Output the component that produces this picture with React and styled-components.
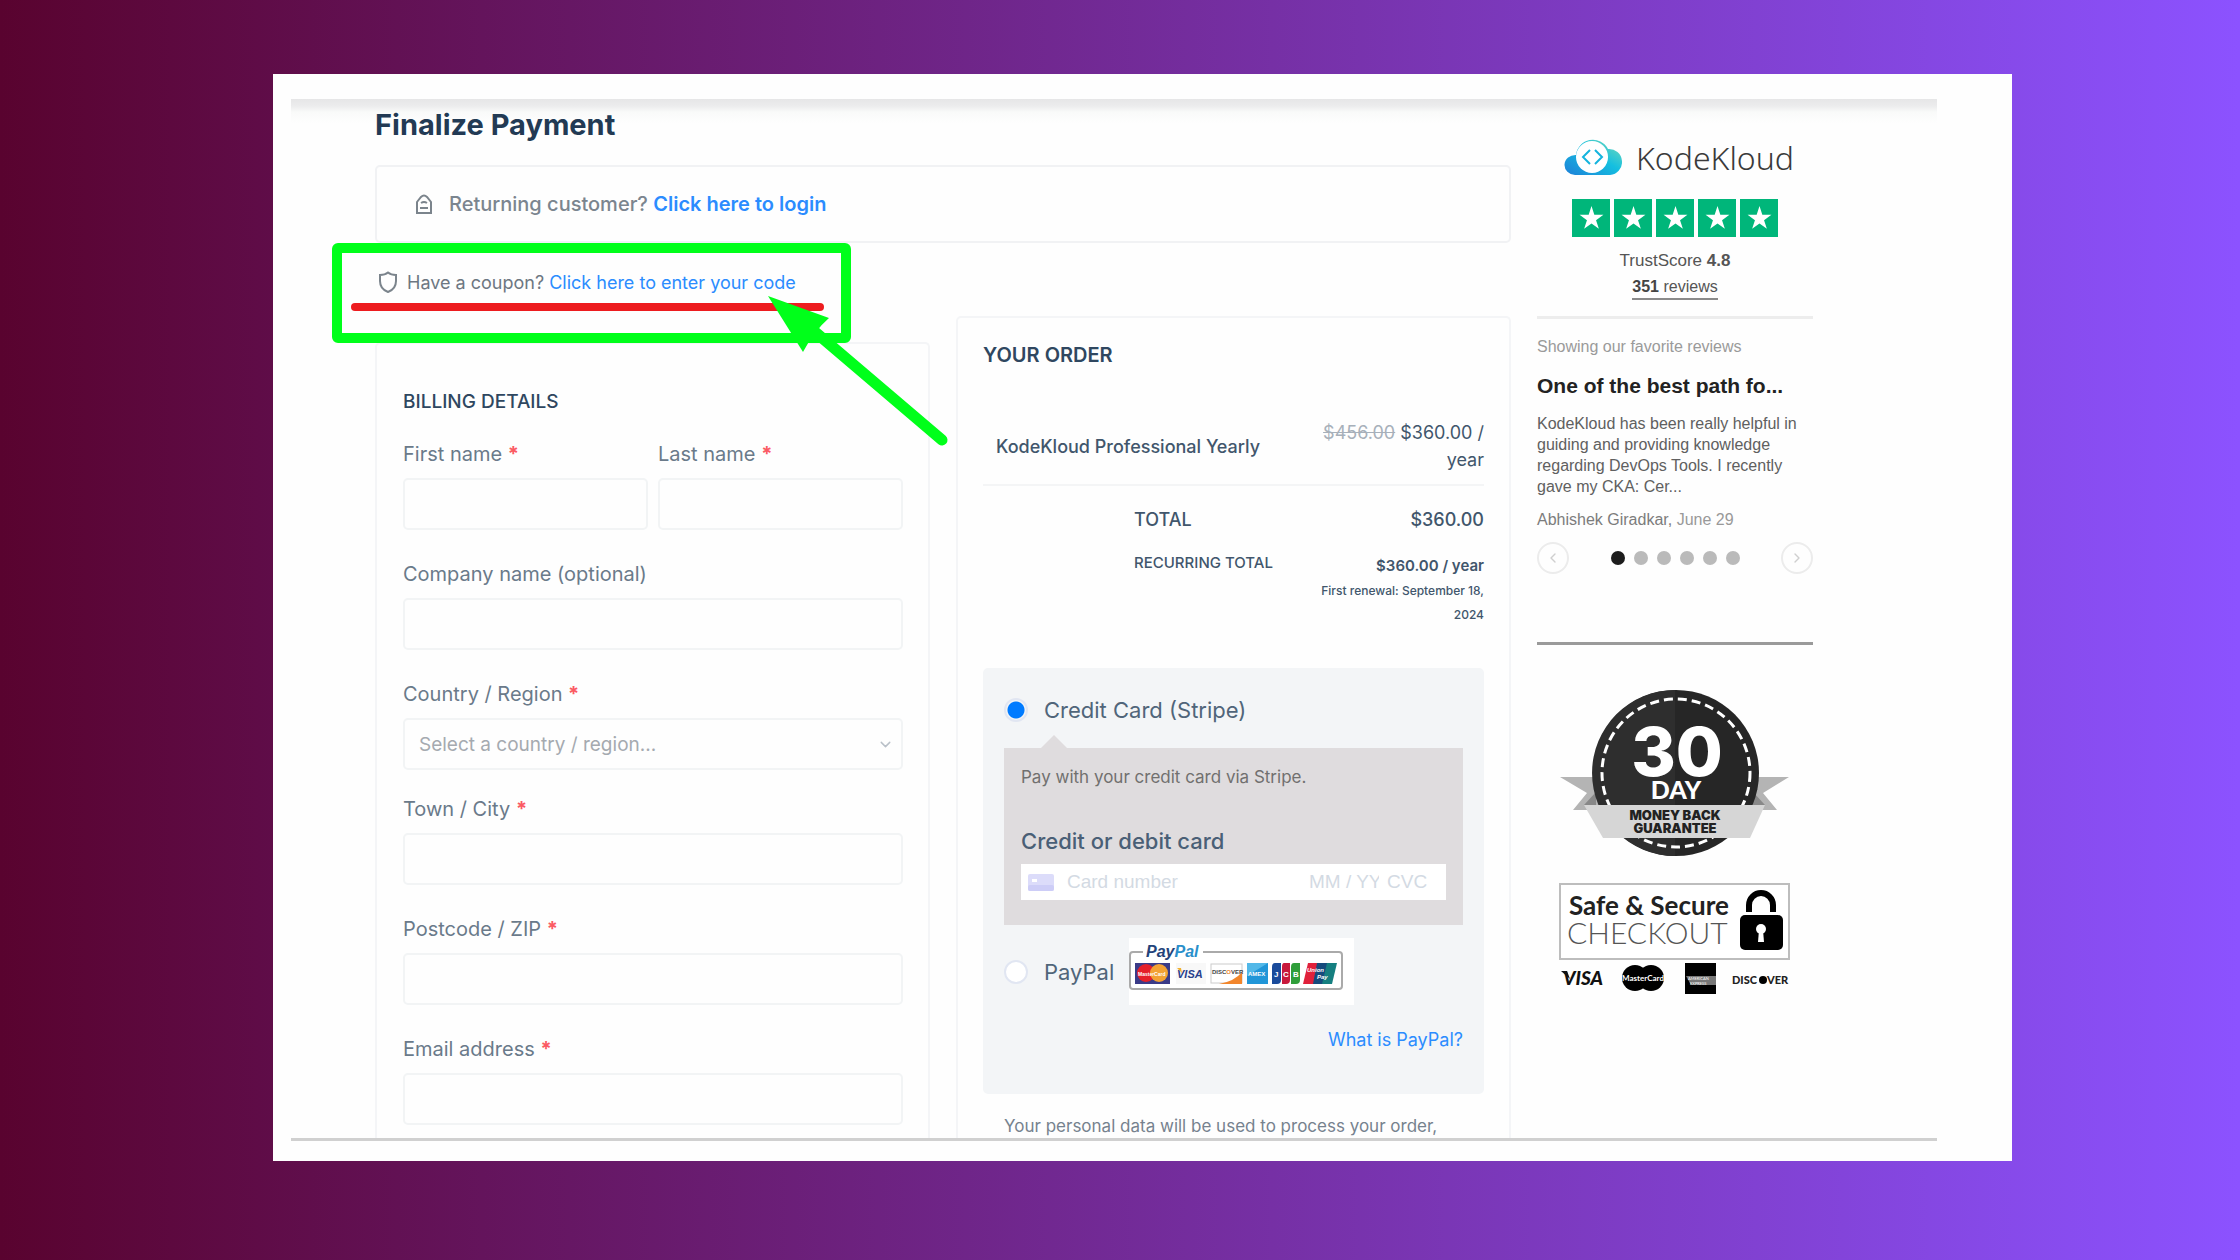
import React from "react";
import styled, { createGlobalStyle, css } from "styled-components";
import { ChevronDown, ChevronLeft, ChevronRight } from "lucide-react";

const Global = createGlobalStyle`
  *, *::before, *::after { box-sizing: border-box; }
  body { margin: 0; font-family: Inter, "Liberation Sans", sans-serif; color: #3d5166; }
  h1, h2, h3, p { margin: 0; }
  button, input, select { font: inherit; margin: 0; }
`;

const Page = styled.div`
  min-height: 100vh;
  display: flex;
  padding: 74px 228px 99px 273px;
  background: linear-gradient(90deg, #59032f 0%, #8c52ff 100%);
`;

const Slide = styled.div`
  flex: 1;
  display: flex;
  padding: 25px 75px 20px 18px;
  background: #fefefe;
`;

const Shot = styled.div`
  flex: 1;
  display: grid;
  grid-template-columns: minmax(0, 1fr) 276px;
  column-gap: 26px;
  padding: 0 124px 0 84px;
  border-bottom: 3px solid #d0d0d0;
  background: linear-gradient(#e6e6e7 0, #ececed 7px, #f9faf9 13px, #fefefe 24px);
`;

const Main = styled.main`
  display: flex;
  flex-direction: column;
`;

const Title = styled.h1`
  height: 66px;
  padding-top: 8px;
  font-size: 29px;
  line-height: 36px;
  font-weight: 700;
  color: #223a54;
`;

const LoginNotice = styled.div`
  display: flex;
  align-items: center;
  gap: 16px;
  height: 78px;
  padding-left: 38px;
  border: 2px solid #f1f2f4;
  border-radius: 5px;
  font-size: 20px;
  font-weight: 500;
  color: #7b858f;
`;

const TextLink = styled.a`
  color: #2b8cff;
  font-weight: ${(p) => (p.$strong ? 600 : 400)};
  text-decoration: none;
`;

const Columns = styled.div`
  flex: 1;
  display: grid;
  grid-template-columns: minmax(0, 1fr) minmax(0, 1fr);
  column-gap: 26px;
`;

const Column = styled.div`
  display: flex;
  flex-direction: column;
  padding-top: ${(p) => p.$top}px;
`;

const CouponRow = styled.div`
  position: relative;
  display: flex;
  align-items: center;
  gap: 9px;
  height: 99px;
  padding: 0 0 21px 3px;
  font-size: 18px;
  color: #6d7782;
  white-space: nowrap;
`;

const Markup = styled.svg`
  position: absolute;
  left: -43px;
  top: 0;
  overflow: visible;
  pointer-events: none;
`;

const Card = styled.section`
  flex: 1;
  padding: ${(p) => p.$pad};
  border: 2px solid #f4f5f7;
  border-bottom: 0;
  border-radius: 5px 5px 0 0;
`;

const CardTitle = styled.h2`
  font-size: ${(p) => p.$size}px;
  line-height: 24px;
  font-weight: ${(p) => p.$weight};
  color: #2f4760;
`;

const FieldGrid = styled.div`
  display: grid;
  grid-template-columns: 1fr 1fr;
  column-gap: 10px;
  row-gap: 32px;
  padding-top: 28px;
`;

const Field = styled.div`
  display: flex;
  flex-direction: column;
  gap: 12px;
  grid-column: ${(p) => (p.$half ? "auto" : "1 / -1")};
`;

const Label = styled.label`
  font-size: 20px;
  line-height: 24px;
  color: #6a7a8a;
`;

const Star = styled.span`
  color: #fb5a63;
  font-weight: 700;
`;

const box = css`
  width: 100%;
  height: 52px;
  border: 2px solid #f2f4f5;
  border-radius: 5px;
  background: #fefefe;
`;

const Input = styled.input`
  ${box}
  padding: 0 14px;
`;

const SelectWrap = styled.div`
  display: grid;
  margin-bottom: -5px;
  & > * { grid-area: 1 / 1; }
  svg { justify-self: end; align-self: center; margin-right: 9px; pointer-events: none; }
`;

const Select = styled.select`
  ${box}
  appearance: none;
  padding: 0 14px;
  font-size: 19px;
  color: #a5aab0;
`;

const OrderTable = styled.table`
  width: 100%;
  margin-top: 52px;
  border-collapse: collapse;
  color: #41566c;
  th, td { padding: 0; font-weight: 500; text-align: left; vertical-align: top; }
`;

const ProductCell = styled.th`
  && { padding: 14px 0 0 13px; font-size: 18px; line-height: 27px; font-weight: 500; }
`;

const PriceCell = styled.td`
  && {
    width: 170px;
    padding: ${(p) => p.$pad};
    text-align: right;
    font-size: ${(p) => p.$size}px;
    line-height: 27px;
    font-weight: ${(p) => p.$weight};
  }
  del { color: #a7b0ba; font-weight: 400; }
`;

const ItemRow = styled.tr`
  border-bottom: 2px solid #f4f5f6;
`;

const IndentCol = styled.col`
  width: 151px;
`;

const TotalCell = styled.th`
  && {
    padding: ${(p) => p.$pad};
    font-size: ${(p) => p.$size}px;
    line-height: 27px;
    font-weight: ${(p) => p.$weight};
  }
`;

const Renewal = styled.span`
  display: block;
  font-size: 12px;
  line-height: 24px;
  font-weight: 500;
`;

const Payment = styled.div`
  display: flex;
  flex-direction: column;
  height: 426px;
  margin-top: 40px;
  padding: 28px 21px 0;
  border-radius: 5px;
  background: #f3f5f7;
`;

const Method = styled.div`
  display: flex;
  align-items: center;
  font-size: 22px;
  line-height: 28px;
  color: #50657a;
  label { padding-left: 16px; }
`;

const Radio = styled.input`
  appearance: none;
  width: 24px;
  height: 24px;
  border: 2px solid #e1e6f2;
  border-radius: 50%;
  background: #fff;
  &:checked { background: radial-gradient(circle, #007bff 0 8px, #f3f5f7 9px); }
`;

const StripePanel = styled.div`
  position: relative;
  height: 177px;
  margin-top: 24px;
  padding: 17px 17px;
  background: #dfdcde;
  &::before {
    content: "";
    position: absolute;
    left: 37px;
    top: -13px;
    border: 13px solid transparent;
    border-top: 0;
    border-bottom-color: #dfdcde;
  }
`;

const StripeHint = styled.p`
  font-size: 17px;
  line-height: 24px;
  color: #71706f;
`;

const StripeLabel = styled.label`
  display: block;
  margin: 38px 0 9px;
  font-size: 22px;
  line-height: 28px;
  font-weight: 500;
  color: #4a5f76;
`;

const CardLine = styled.div`
  display: flex;
  align-items: center;
  height: 36px;
  padding: 0 17px 0 7px;
  background: #fff;
`;

const CardInput = styled.input`
  width: ${(p) => p.$w};
  flex: ${(p) => (p.$grow ? 1 : "none")};
  min-width: 0;
  margin-left: ${(p) => p.$gap}px;
  padding: 0;
  border: 0;
  background: none;
  font-family: "Liberation Sans", Arial, sans-serif;
  font-size: 19px;
  &::placeholder { color: #d3dae3; opacity: 1; }
`;

const PayPalMethod = styled(Method)`
  margin-top: 13px;
  svg { margin-left: 15px; }
`;

const WhatIs = styled(TextLink)`
  align-self: flex-end;
  margin-top: 21px;
  font-size: 18px;
  line-height: 28px;
`;

const Privacy = styled.p`
  height: 30px;
  padding: 20px 0 0 21px;
  font-size: 17px;
  line-height: 24px;
  color: #76828e;
`;

const Side = styled.aside`
  display: flex;
  flex-direction: column;
  align-items: center;
  padding-top: 38px;
  font-family: "Liberation Sans", Arial, sans-serif;
`;

const Logo = styled.div`
  display: flex;
  align-items: center;
  gap: 14px;
  height: 40px;
  padding-left: 8px;
  font-family: "Noto Sans", sans-serif;
  font-size: 32px;
  font-weight: 300;
  color: #3a3a3a;
`;

const Stars = styled.div`
  display: flex;
  gap: 4px;
  margin-top: 22px;
`;

const StarTile = styled.span`
  display: grid;
  place-items: center;
  width: 38px;
  height: 38px;
  background: #00b67a;
`;

const Score = styled.p`
  margin-top: 11px;
  font-size: 17px;
  line-height: 26px;
  color: #555;
`;

const ReviewsLink = styled.a`
  margin-top: 2px;
  border-bottom: 2px solid #8a8a8a;
  font-size: 16px;
  line-height: 22px;
  color: #555;
  text-decoration: none;
  strong { color: #444; }
`;

const Rule = styled.hr`
  width: 100%;
  height: 3px;
  margin: ${(p) => p.$top}px 0 0;
  border: 0;
  background: ${(p) => p.$color};
`;

const Review = styled.article`
  align-self: stretch;
  padding-top: 18px;
  white-space: nowrap;
`;

const Muted = styled.p`
  font-size: 16px;
  line-height: 20px;
  color: #9a9a9a;
`;

const ReviewTitle = styled.h3`
  margin-top: 17px;
  font-size: 21px;
  line-height: 24px;
  color: #222;
`;

const ReviewText = styled.p`
  margin-top: 15px;
  font-size: 16px;
  line-height: 21px;
  color: #606060;
  white-space: normal;
`;

const Author = styled.p`
  margin-top: 12px;
  font-size: 16px;
  line-height: 21px;
  color: #999;
  b { color: #7c7c7c; font-weight: 400; }
`;

const Pager = styled.nav`
  align-self: stretch;
  display: flex;
  justify-content: space-between;
  align-items: center;
  margin-top: 12px;
`;

const RoundButton = styled.button`
  display: grid;
  place-items: center;
  width: 32px;
  height: 32px;
  padding: 0;
  border: 2px solid #ececec;
  border-radius: 50%;
  background: none;
  color: #cfcfcf;
`;

const Dots = styled.div`
  display: flex;
  gap: 9px;
`;

const Dot = styled.button`
  width: 14px;
  height: 14px;
  padding: 0;
  border: 0;
  border-radius: 50%;
  background: ${(p) => (p.$on ? "#1c1c1c" : "#bababa")};
`;

const Badge = styled.svg`
  margin-top: 44px;
`;

const Secure = styled.svg`
  margin-top: 26px;
`;

function TextField({ id, label, required, half }) {
  return (
    <Field $half={half}>
      <Label htmlFor={id}>
        {label} {required && <Star>*</Star>}
      </Label>
      <Input id={id} type="text" />
    </Field>
  );
}

function CouponMarkup() {
  return (
    <Markup width="620" height="210" viewBox="0 0 620 210" aria-hidden="true">
      <path d="M23 64H488" stroke="#ed1c1f" strokeWidth="8" strokeLinecap="round" />
      <rect x="5" y="5" width="509" height="90" rx="1" fill="none" stroke="#00ff1a" strokeWidth="10" strokeLinejoin="round" />
      <path d="M482 88L610 197" stroke="#00ff1a" strokeWidth="11" strokeLinecap="round" />
      <path d="M436 53L497 75Q482 88 471 109Z" fill="#00ff1a" />
    </Markup>
  );
}

function PayPalCards() {
  return (
    <svg width="225" height="67" viewBox="0 0 225 67" role="img" aria-label="PayPal accepted cards" fontFamily="Liberation Sans, Arial, sans-serif">
      <rect width="225" height="67" fill="#fff" />
      <rect x="1" y="14" width="212" height="37" rx="3" fill="none" stroke="#aaa" strokeWidth="2" />
      <rect x="14" y="8" width="60" height="12" fill="#fff" />
      <text x="17" y="19" fontSize="16" fontWeight="700" fontStyle="italic" fill="#23437a">Pay<tspan fill="#2a8fcb">Pal</tspan></text>
      <rect x="6" y="25" width="35" height="21" fill="#3a3b88" />
      <circle cx="17" cy="35" r="9" fill="#e5202a" />
      <circle cx="30" cy="35" r="9" fill="#f3a233" />
      <text x="9" y="38" fontSize="5" fontWeight="700" fill="#fff">MasterCard</text>
      <rect x="47" y="25" width="30" height="21" fill="#f8f8f8" />
      <text x="48" y="40" fontSize="11" fontWeight="700" fontStyle="italic" fill="#28408c">VISA</text>
      <path d="M48 30l4 0l1 5z" fill="#f0b030" />
      <rect x="82" y="26" width="31" height="19" fill="#fff" stroke="#ccc" />
      <path d="M113 34Q106 43 90 46H113Z" fill="#f2862c" />
      <text x="83" y="36" fontSize="6" fontWeight="700" fill="#444">DISC<tspan fill="#f2862c">O</tspan>VER</text>
      <rect x="118" y="25" width="21" height="21" fill="#2196d8" />
      <path d="M118 25h21l-21 13z" fill="#52b8e8" />
      <text x="119" y="38" fontSize="6" fontWeight="700" fill="#fff">AMEX</text>
      <path d="M146 25h6v17q0 4-4 4h-5V29q0-4 3-4z" fill="#1a4b9b" />
      <path d="M155 25h6v17q0 4-4 4h-4V29q0-4 2-4z" fill="#c8193c" />
      <path d="M165 25h6v17q0 4-4 4h-5V29q0-4 3-4z" fill="#2f9e3a" />
      <text x="145" y="39" fontSize="8" fontWeight="700" fill="#fff"><tspan>J</tspan><tspan x="154">C</tspan><tspan x="164">B</tspan></text>
      <path d="M179 25h10l-4 21h-11z" fill="#e0213b" />
      <path d="M188 25h11l-4 21h-11z" fill="#154a7c" />
      <path d="M198 25h10l-5 21h-10z" fill="#157f80" />
      <text x="178" y="34" fontSize="6" fontWeight="700" fontStyle="italic" fill="#fff"><tspan>Union</tspan><tspan x="188" y="41">Pay</tspan></text>
    </svg>
  );
}

function GuaranteeBadge() {
  return (
    <Badge width="230" height="168" viewBox="0 0 230 168" role="img" aria-label="30 day money back guarantee" fontFamily="Inter, sans-serif" textAnchor="middle">
      <path d="M0 88H40V121H13L27 104Z" fill="#b4b4b4" />
      <path d="M229 88H189V121H217L203 104Z" fill="#b4b4b4" />
      <path d="M24 116L36 103V116Z" fill="#888" />
      <path d="M205 116L193 103V116Z" fill="#888" />
      <circle cx="116" cy="84" r="83" fill="#262626" />
      <path d="M115 1A83 83 0 0 0 115 167Z" fill="#2e2e2e" />
      <circle cx="116" cy="84" r="74" fill="none" stroke="#fff" strokeWidth="3" strokeDasharray="9 5" />
      <path d="M24 116H205L190 149H43Z" fill="#d6d6d6" />
      <text x="117" y="87" fontSize="68" fontWeight="800" fill="#fff">30</text>
      <text x="116" y="110" fontSize="25" fontWeight="900" fontFamily="Lato, sans-serif" fill="#fff">DAY</text>
      <text x="115" y="131" fontSize="13" fontWeight="900" fill="#222">MONEY BACK</text>
      <text x="115" y="144" fontSize="13" fontWeight="900" fill="#222">GUARANTEE</text>
    </Badge>
  );
}

function SecureCheckout() {
  return (
    <Secure width="232" height="112" viewBox="0 0 232 112" role="img" aria-label="Safe and secure checkout" fontFamily="Lato, sans-serif">
      <rect x="1" y="1" width="229" height="75" fill="#fff" stroke="#bdbdbd" strokeWidth="2" />
      <text x="10" y="32" fontSize="26" fontWeight="700" fill="#222">Safe &amp; Secure</text>
      <text x="8" y="61" fontSize="30" fontWeight="300" fill="#555">CHECKOUT</text>
      <path d="M190 29V22a12 12 0 0 1 24 0V29" fill="none" stroke="#000" strokeWidth="6" />
      <rect x="181" y="32" width="43" height="35" rx="5" fill="#000" />
      <circle cx="202" cy="46" r="5" fill="#fff" />
      <path d="M200 47h4l1 12h-6z" fill="#fff" />
      <path d="M2 88h6l3 8z" fill="#111" />
      <text x="4" y="102" fontSize="19" fontWeight="900" fontStyle="italic" fill="#111">VISA</text>
      <circle cx="76" cy="95" r="13" fill="#000" />
      <circle cx="92" cy="95" r="13" fill="#000" />
      <text x="84" y="98" textAnchor="middle" fontSize="8" fontWeight="700" fill="#fff">MasterCard</text>
      <rect x="126" y="80" width="31" height="31" fill="#000" />
      <path d="M127 93h30v9h-25z" fill="#777" />
      <text x="129" y="97" fontSize="4" fill="#fff">AMERICAN</text>
      <text x="131" y="102" fontSize="4" fill="#fff">EXPRESS</text>
      <text x="173" y="101" fontSize="11" fontWeight="900" fill="#222">DISC</text>
      <circle cx="204" cy="97" r="4" fill="#000" />
      <text x="208" y="101" fontSize="11" fontWeight="900" fill="#222">VER</text>
    </Secure>
  );
}

export default function App() {
  return (
    <Page>
      <Global />
      <Slide>
        <Shot>
          <Main>
            <Title>Finalize Payment</Title>
            <LoginNotice>
              <svg width="18" height="21" viewBox="0 0 18 21" fill="none" stroke="#7b848c" strokeWidth="2">
                <path d="M2 8L6 3Q9 0 12 3L16 8V19H2ZM6 9Q9 7 12 9" />
                <path d="M5 14H13" />
              </svg>
              <span>
                Returning customer? <TextLink $strong href="#login">Click here to login</TextLink>
              </span>
            </LoginNotice>
            <Columns>
              <Column $top={0}>
                <CouponRow>
                  <svg width="20" height="22" viewBox="0 0 20 22" fill="none" stroke="#7b848c" strokeWidth="2">
                    <path d="M2 4Q7 4 10 1.500Q13 4 18 4V10Q18 18 10 21Q2 18 2 10Z" />
                  </svg>
                  <span>
                    Have a coupon? <TextLink href="#coupon">Click here to enter your code</TextLink>
                  </span>
                  <CouponMarkup />
                </CouponRow>
                <Card $pad="46px 25px 0 26px">
                  <CardTitle $size={19} $weight={500}>BILLING DETAILS</CardTitle>
                  <FieldGrid>
                    <TextField id="first" label="First name" required half />
                    <TextField id="last" label="Last name" required half />
                    <TextField id="company" label="Company name (optional)" />
                    <Field>
                      <Label htmlFor="country">
                        Country / Region <Star>*</Star>
                      </Label>
                      <SelectWrap>
                        <Select id="country">
                          <option>Select a country / region...</option>
                        </Select>
                        <ChevronDown size={17} color="#b9c0c8" />
                      </SelectWrap>
                    </Field>
                    <TextField id="town" label="Town / City" required />
                    <TextField id="postcode" label="Postcode / ZIP" required />
                    <TextField id="email" label="Email address" required />
                  </FieldGrid>
                </Card>
              </Column>
              <Column $top={73}>
                <Card $pad="25px 25px 0">
                  <CardTitle $size={20} $weight={600}>YOUR ORDER</CardTitle>
                  <OrderTable>
                    <colgroup>
                      <IndentCol />
                      <col />
                      <col />
                    </colgroup>
                    <tbody>
                      <ItemRow>
                        <ProductCell colSpan={2}>KodeKloud Professional Yearly</ProductCell>
                        <PriceCell $size={18} $weight={400} $pad="0 0 11px">
                          <del>$456.00</del> $360.00 / year
                        </PriceCell>
                      </ItemRow>
                      <tr>
                        <td />
                        <TotalCell $size={18} $weight={500} $pad="20px 0 0">TOTAL</TotalCell>
                        <PriceCell $size={18} $weight={500} $pad="20px 0 0">$360.00</PriceCell>
                      </tr>
                      <tr>
                        <td />
                        <TotalCell $size={15} $weight={500} $pad="16px 0 0">RECURRING TOTAL</TotalCell>
                        <PriceCell $size={15} $weight={600} $pad="19px 0 1px">
                          $360.00 / year
                          <Renewal>First renewal: September 18, 2024</Renewal>
                        </PriceCell>
                      </tr>
                    </tbody>
                  </OrderTable>
                  <Payment>
                    <Method>
                      <Radio type="radio" id="stripe" name="method" defaultChecked />
                      <label htmlFor="stripe">Credit Card (Stripe)</label>
                    </Method>
                    <StripePanel>
                      <StripeHint>Pay with your credit card via Stripe.</StripeHint>
                      <StripeLabel htmlFor="card">Credit or debit card</StripeLabel>
                      <CardLine>
                        <svg width="26" height="17" viewBox="0 0 26 17">
                          <rect width="26" height="17" rx="2" fill="#dcdcfa" />
                          <rect y="11" width="26" height="6" rx="2" fill="#cdcdf7" />
                          <rect x="4" y="5" width="5" height="3" fill="#fff" />
                        </svg>
                        <CardInput id="card" $grow $gap={13} placeholder="Card number" />
                        <CardInput aria-label="Expiry date" $w="70px" $gap={8} placeholder="MM / YY" />
                        <CardInput aria-label="CVC" $w="42px" $gap={8} placeholder="CVC" />
                      </CardLine>
                    </StripePanel>
                    <PayPalMethod>
                      <Radio type="radio" id="paypal" name="method" />
                      <label htmlFor="paypal">PayPal</label>
                      <PayPalCards />
                    </PayPalMethod>
                    <WhatIs href="#paypal-info">What is PayPal?</WhatIs>
                  </Payment>
                  <Privacy>Your personal data will be used to process your order,</Privacy>
                </Card>
              </Column>
            </Columns>
          </Main>
          <Side>
            <Logo>
              <svg width="58" height="38" viewBox="0 0 58 38">
                <defs>
                  <linearGradient id="cloud" x1="0" y1="1" x2="1" y2="0">
                    <stop offset="0" stopColor="#1e7fd8" />
                    <stop offset="0.550" stopColor="#14bfe0" />
                    <stop offset="1" stopColor="#7ddcb5" />
                  </linearGradient>
                </defs>
                <path d="M11 37A11 10 0 0 1 12 17A17 17 0 0 1 44 11A13 13 0 0 1 46 37Z" fill="url(#cloud)" />
                <circle cx="28" cy="19" r="16" fill="#fff" />
                <path d="M26 12L19 19L26 26M31 12L38 19L31 26" fill="none" stroke="#14b4de" strokeWidth="2" />
              </svg>
              <span>KodeKloud</span>
            </Logo>
            <Stars role="img" aria-label="5 stars">
              {[1, 2, 3, 4, 5].map((n) => (
                <StarTile key={n}>
                  <svg width="27" height="26" viewBox="0 0 24 24">
                    <path d="M12 1L14.600 9H23L16.200 14L18.800 22L12 17L5.200 22L7.800 14L1 9H9.400Z" fill="#fff" />
                  </svg>
                </StarTile>
              ))}
            </Stars>
            <Score>
              TrustScore <strong>4.8</strong>
            </Score>
            <ReviewsLink href="#reviews">
              <strong>351</strong> reviews
            </ReviewsLink>
            <Rule $top={16} $color="#ededed" />
            <Review>
              <Muted>Showing our favorite reviews</Muted>
              <ReviewTitle>One of the best path fo...</ReviewTitle>
              <ReviewText>
                KodeKloud has been really helpful in guiding and providing knowledge regarding DevOps Tools. I recently gave my CKA: Cer...
              </ReviewText>
              <Author>
                <b>Abhishek Giradkar,</b> June 29
              </Author>
            </Review>
            <Pager aria-label="Reviews">
              <RoundButton aria-label="Previous review">
                <ChevronLeft size={16} />
              </RoundButton>
              <Dots>
                {[1, 2, 3, 4, 5, 6].map((n) => (
                  <Dot key={n} $on={n === 1} aria-label={"Review " + n} />
                ))}
              </Dots>
              <RoundButton aria-label="Next review">
                <ChevronRight size={16} />
              </RoundButton>
            </Pager>
            <Rule $top={68} $color="#9a9a9a" />
            <GuaranteeBadge />
            <SecureCheckout />
          </Side>
        </Shot>
      </Slide>
    </Page>
  );
}
